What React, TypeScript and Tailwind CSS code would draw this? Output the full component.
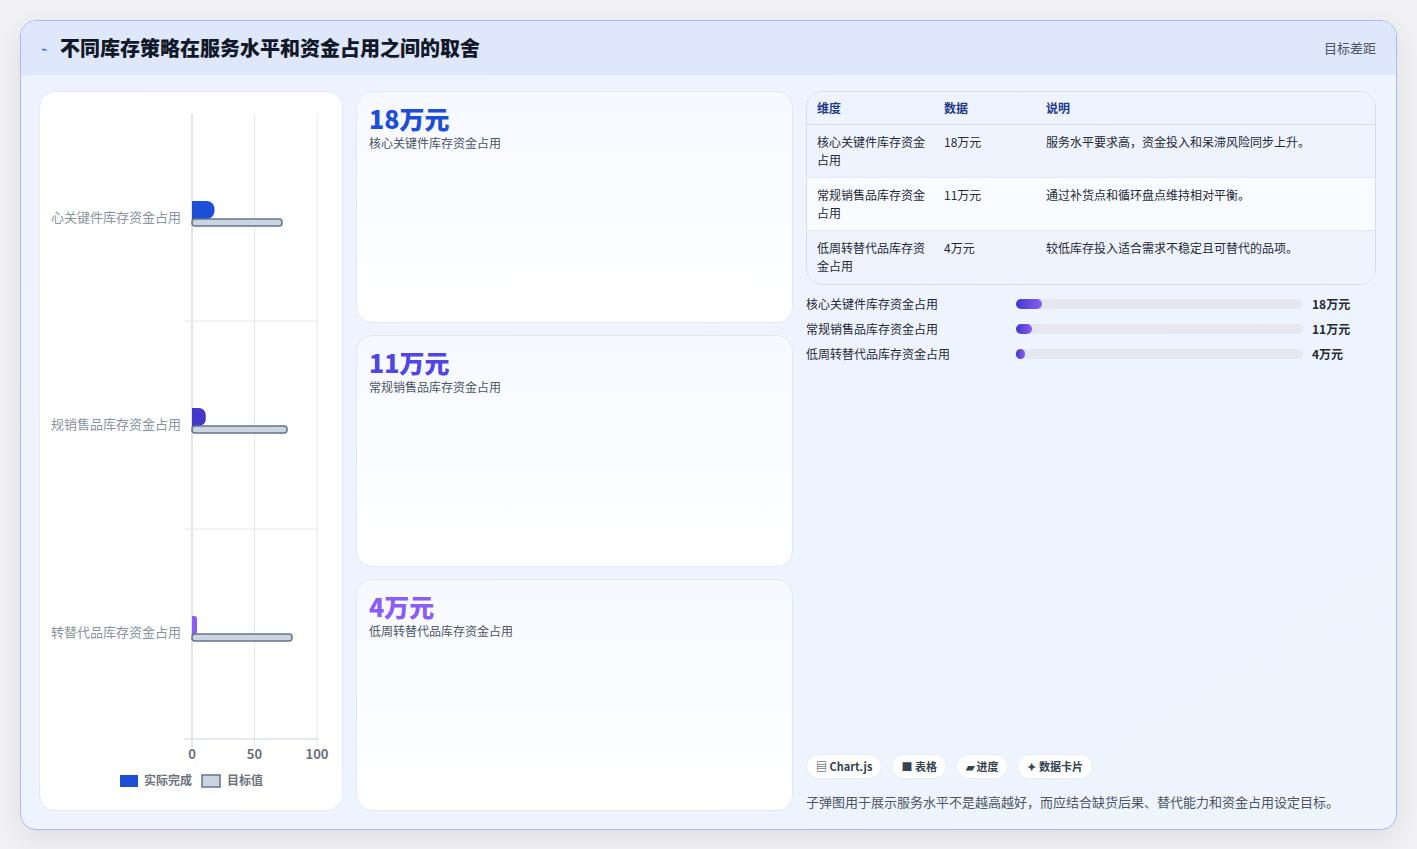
const F = { fontFamily: '"Noto Sans CJK SC", "Noto Sans", sans-serif' };

const cards = [
  { v: "18万元", l: "核心关键件库存资金占用", c: "text-[#1d4ed8]" },
  { v: "11万元", l: "常规销售品库存资金占用", c: "text-[#4f46e5]" },
  { v: "4万元", l: "低周转替代品库存资金占用", c: "text-[#8b5cf6]" },
];

const rows = [
  ["核心关键件库存资金占用", "18万元", "服务水平要求高，资金投入和呆滞风险同步上升。", 26],
  ["常规销售品库存资金占用", "11万元", "通过补货点和循环盘点维持相对平衡。", 16],
  ["低周转替代品库存资金占用", "4万元", "较低库存投入适合需求不稳定且可替代的品项。", 9],
] as const;

function Chart() {
  const x0 = 152;
  const s = 1.25;
  const bars = [
    { label: "心关键件库存资金占用", a: 18, t: 72, c: "#1d4ed8", cy: 125 },
    { label: "规销售品库存资金占用", a: 11, t: 76, c: "#4338ca", cy: 332 },
    { label: "转替代品库存资金占用", a: 4, t: 80, c: "#8b5cf6", cy: 540 },
  ];
  return (
    <svg width="304" height="718" className="block">
      {[0, 50, 100].map((v) => (
        <line key={v} x1={x0 + v * s} x2={x0 + v * s} y1={22} y2={655} stroke="#e5e7eb" />
      ))}
      <line x1={x0} x2={x0} y1={22} y2={655} stroke="#d1d5db" />
      {[229, 437].map((y) => (
        <line key={y} x1={144} x2={278} y1={y} y2={y} stroke="#e5e7eb" />
      ))}
      <line x1={144} x2={278} y1={647} y2={647} stroke="#cbd5e1" />
      {bars.map((b) => {
        const w = b.a * s;
        const r = Math.min(8, w / 2);
        return (
          <g key={b.label}>
            <text x={141} y={b.cy + 5} textAnchor="end" fontSize="13" fill="#8b93a1" style={F}>{b.label}</text>
            <path
              d={`M${x0} ${b.cy - 16} h${w - r} a${r} ${r} 0 0 1 ${r} ${r} v${18 - 2 * r} a${r} ${r} 0 0 1 -${r} ${r} h-${w - r} z`}
              fill={b.c}
            />
            <rect x={x0} y={b.cy + 2} width={b.t * s} height={7} rx={3} fill="#cbd5e1" stroke="#64748b" strokeWidth="1.5" />
          </g>
        );
      })}
      {[0, 50, 100].map((v) => (
        <text key={v} x={x0 + v * s} y={667} textAnchor="middle" fontSize="13" fontWeight="600" fill="#6b7280" style={F}>{v}</text>
      ))}
      <rect x={80} y={683} width={18} height={12} fill="#1d4ed8" />
      <text x={104} y={693} fontSize="12" fill="#6b7280" fontWeight="600" style={F}>实际完成</text>
      <rect x={162} y={683} width={18} height={12} fill="#cbd5e1" stroke="#64748b" strokeWidth="1.5" />
      <text x={187} y={693} fontSize="12" fill="#6b7280" fontWeight="600" style={F}>目标值</text>
    </svg>
  );
}

export default function App() {
  return (
    <div className="min-h-[849px] bg-[#f1f1f3] p-5" style={F}>
      <div className="h-[810px] overflow-hidden rounded-2xl border border-[#a9b8f0] bg-gradient-to-br from-[#eef2fe] to-[#eef5ff] shadow-[0_8px_24px_rgba(0,0,0,0.08)] flex flex-col">
        <div className="flex h-14 items-center justify-between bg-[#dfe7fd] px-5">
          <div className="flex items-center gap-3">
            <span className="text-[11px] text-[#3b5bdb]">⌁</span>
            <span className="text-[20px] font-extrabold text-[#111827]">不同库存策略在服务水平和资金占用之间的取舍</span>
          </div>
          <span className="text-[13px] text-[#4b5563]">目标差距</span>
        </div>
        <div className="flex flex-1 gap-[13px] pb-[18px] pl-[18px] pr-5 pt-[16px]">
          <div className="w-[304px] shrink-0 overflow-hidden rounded-2xl border border-[#e5e9f5] bg-white">
            <Chart />
          </div>
          <div className="flex w-[437px] shrink-0 flex-col gap-3">
            {cards.map((c) => (
              <div key={c.v} className="flex-1 rounded-2xl border border-[#e3e8f5] bg-gradient-to-b from-[#f6f9ff] to-white px-[12px] py-[10px]">
                <div className={`text-[25px] font-extrabold leading-[32px] ${c.c}`}>{c.v}</div>
                <div className="text-[12px] text-[#4b5563]">{c.l}</div>
              </div>
            ))}
          </div>
          <div className="flex flex-1 flex-col">
            <div className="overflow-hidden rounded-2xl border border-[#d5dcef]">
              <div className="flex h-[33px] items-center border-b border-[#d5dcef] bg-[#eef3ff] text-[12px] font-semibold text-[#1e3a8a]">
                <div className="w-[137px] pl-[10px]">维度</div>
                <div className="w-[102px]">数据</div>
                <div>说明</div>
              </div>
              {rows.map((r, i) => (
                <div key={r[0]} className={`flex h-[53px] pt-[8px] text-[12px] leading-[18px] text-[#1f2937] ${i < 2 ? "border-b border-[#e2e8f4]" : ""} ${i === 1 ? "bg-[#f8fbff]" : "bg-[#eef3fe]"}`}>
                  <div className="w-[137px] pl-[10px] pr-[12px]">{r[0]}</div>
                  <div className="w-[102px]">{r[1]}</div>
                  <div>{r[2]}</div>
                </div>
              ))}
            </div>
            <div className="mt-[10px] flex flex-col gap-[7px]">
              {rows.map((r) => (
                <div key={r[0]} className="flex h-[18px] items-center text-[12px] text-[#1f2937]">
                  <div className="w-[210px]">{r[0]}</div>
                  <div className="h-[10px] w-[287px] rounded-full bg-[#e5e8ef]">
                    <div className="h-full rounded-full bg-gradient-to-r from-[#4338ca] to-[#8b5cf6]" style={{ width: r[3] }} />
                  </div>
                  <div className="ml-[9px] font-semibold">{r[1]}</div>
                </div>
              ))}
            </div>
            <div className="mt-auto flex gap-[9px]">
              {["▤ Chart.js", "■ 表格", "▰ 进度", "✦ 数据卡片"].map((t) => (
                <span key={t} className="rounded-full border border-[#e6ebf5] bg-white px-[9px] py-[3px] text-[11px] font-semibold text-[#374151]">{t}</span>
              ))}
            </div>
            <div className="mt-[13px] text-[13px] text-[#4b5563]">子弹图用于展示服务水平不是越高越好，而应结合缺货后果、替代能力和资金占用设定目标。</div>
          </div>
        </div>
      </div>
    </div>
  );
}
